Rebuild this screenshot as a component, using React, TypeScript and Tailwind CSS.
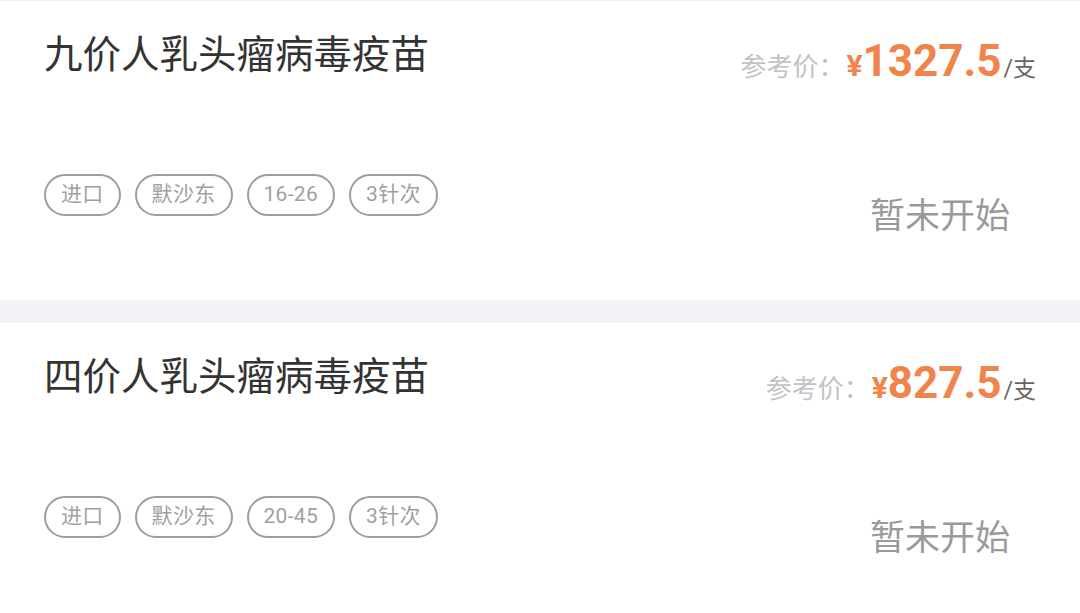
const vaccines = [
  { name: '九价人乳头瘤病毒疫苗', price: '1327.5', tags: ['进口', '默沙东', '16-26', '3针次'] },
  { name: '四价人乳头瘤病毒疫苗', price: '827.5', tags: ['进口', '默沙东', '20-45', '3针次'] },
]

const font = { fontFamily: 'Roboto, "Noto Sans CJK SC", sans-serif' }

function VaccineCard({ name, price, tags }: { name: string; price: string; tags: string[] }) {
  return (
    <div className="bg-white h-[299px] px-[44px] pt-[33px]">
      <div className="flex items-start justify-between">
        <h2 className="text-[38.5px] leading-[42px] text-[#333333] font-normal">{name}</h2>
        <div className="flex items-baseline mt-[7px]">
          <span className="text-[26px] text-[#c2c2c8]">参考价：</span>
          <span className="text-[30px] font-bold text-[#f0844a] ml-[2px]">¥</span>
          <span className="text-[44px] leading-[40px] font-bold text-[#f0844a]">{price}</span>
          <span className="text-[23px] text-[#666666] ml-[2px]">/支</span>
        </div>
      </div>
      <div className="flex items-start justify-between mt-[86px]">
        <div className="flex gap-[14px]">
          {tags.map(t => (
            <span
              key={t}
              className="h-[42px] px-[15px] flex items-center rounded-full border-2 border-[#9d9d9d] text-[21px] tracking-[0.3px] text-[#9f9f9f]"
            >
              {t}
            </span>
          ))}
        </div>
        <span className="text-[35px] leading-[40px] text-[#9a9a9a] mt-[23px] mr-[26px]">暂未开始</span>
      </div>
    </div>
  )
}

export default function App() {
  return (
    <div className="w-[1080px] h-[613px] overflow-hidden bg-white" style={font}>
      <div className="h-[1px] bg-[#f0f0f2]" />
      <VaccineCard {...vaccines[0]} />
      <div className="h-[23px] bg-[#f3f2f7]" />
      <VaccineCard {...vaccines[1]} />
    </div>
  )
}
